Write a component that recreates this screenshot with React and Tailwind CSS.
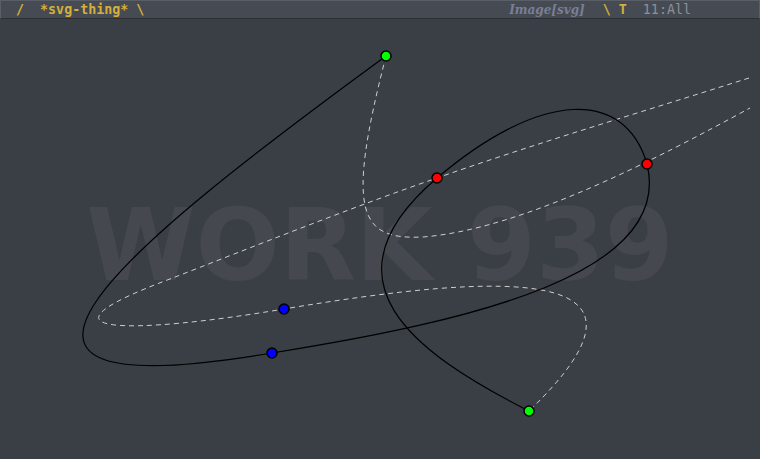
import React from 'react';

const solid =
  'M386 56 C111 257 -75 412 272 353 ' +
  'C472 321 674 274 647 164 ' +
  'C625 89 542 89 437 178 ' +
  'C317 280 412 352 529 411';

const dashedA = 'M386 56 C345 215 360 240 423 237 C523 229 658 158 750 108';

const dashedB =
  'M749 78 C645 111 537 143 437 178 ' +
  'C350 208 250 248 170 279 ' +
  'C20 335 130 335 284 309 ' +
  'C504 272 682 264 529 411';

const handles = [
  { x: 386, y: 56, fill: '#00ff00' },
  { x: 437, y: 178, fill: '#ff0000' },
  { x: 647, y: 164, fill: '#ff0000' },
  { x: 284, y: 309, fill: '#0000ff' },
  { x: 272, y: 353, fill: '#0000ff' },
  { x: 529, y: 411, fill: '#00ff00' },
];

function ModeLine() {
  return (
    <div className="flex h-[19px] items-center border-x border-t border-b border-x-[#5a5f67] border-t-[#5a5f67] border-b-[#2c2f34] bg-[#464b53] text-[13.33px] leading-none">
      <span className="whitespace-pre pl-[15px] font-['DejaVu_Sans_Mono',monospace] font-bold text-[#d3b03c]">
        {'/  *svg-thing* \\'}
      </span>
      <div className="ml-auto flex items-center pr-[68px]">
        <span className="font-['DejaVu_Serif',serif] font-bold italic font-stretch-condensed text-[#7a7e96]">
          Image[svg]
        </span>
        <span className="ml-[18px] whitespace-pre font-['DejaVu_Sans_Mono',monospace] font-bold text-[#d3b03c]">
          {'\\ T'}
        </span>
        <span className="ml-[16px] font-['DejaVu_Sans_Mono',monospace] text-[#8b909a]">11:All</span>
      </div>
    </div>
  );
}

export default function App() {
  return (
    <div className="flex h-[459px] w-[760px] flex-col overflow-hidden bg-[#3a3e45]">
      <ModeLine />
      <div className="relative flex flex-1 items-center justify-center pt-[12px]">
        <span className="select-none font-['DejaVu_Sans',sans-serif] text-[99px] font-bold leading-none text-[#45494f]">
          WORK 939
        </span>
        <svg
          className="absolute inset-0"
          width="760"
          height="440"
          viewBox="0 19 760 440"
        >
          <path d={dashedA} fill="none" stroke="#cfcfcf" strokeWidth="1" strokeDasharray="5 4" />
          <path d={dashedB} fill="none" stroke="#cfcfcf" strokeWidth="1" strokeDasharray="5 4" />
          <path d={solid} fill="none" stroke="#000" strokeWidth="1.2" />
          {handles.map((h, i) => (
            <circle key={i} cx={h.x} cy={h.y} r="5" fill={h.fill} stroke="#000" strokeWidth="1.5" />
          ))}
        </svg>
      </div>
    </div>
  );
}
